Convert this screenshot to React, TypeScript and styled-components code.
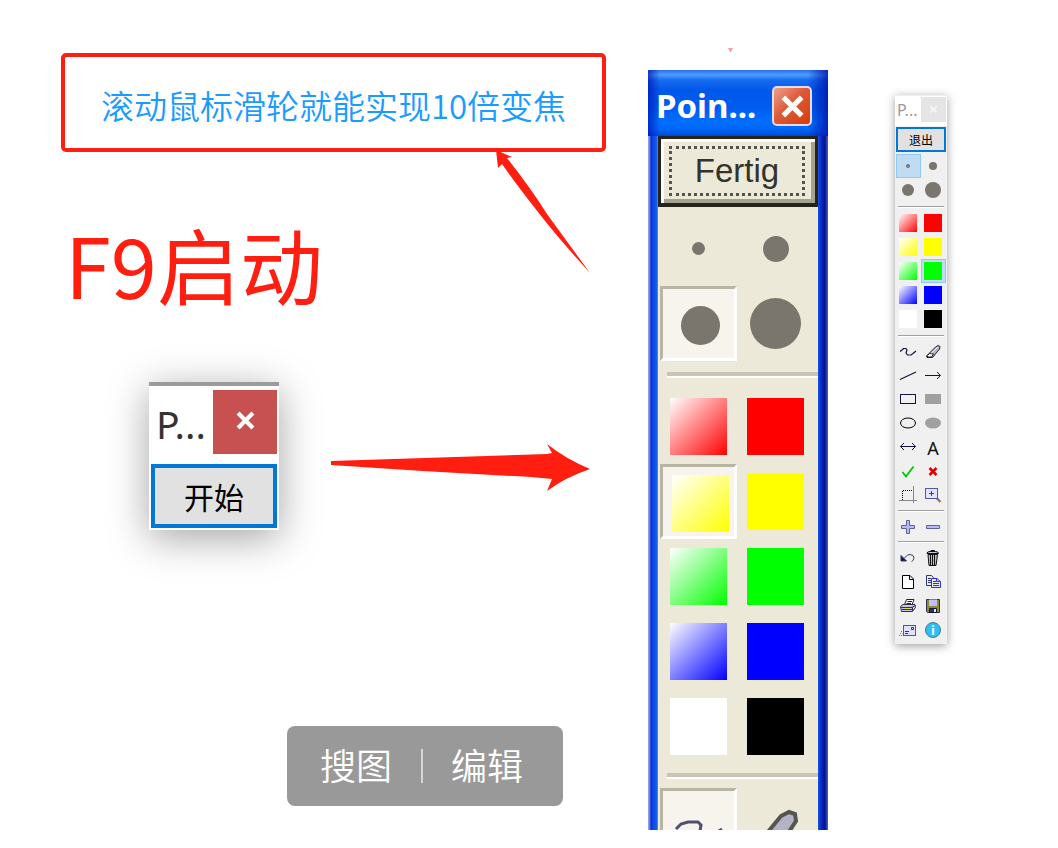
import React from "react";
import styled, { createGlobalStyle, css } from "styled-components";

const GlobalStyle = createGlobalStyle`
  *, *::before, *::after { box-sizing: border-box; }
  body {
    margin: 0;
    background: #fff;
    font-family: "Noto Sans", "Noto Sans CJK SC", sans-serif;
  }
  button { font: inherit; color: inherit; margin: 0; padding: 0; border: 0; background: none; cursor: pointer; }
  svg { display: block; overflow: visible; flex: none; }
`;

const RED = "#ff1e10";
const INK = "#14143c";

/* ---------- page ---------- */

const Board = styled.main`
  display: grid;
  grid-template-columns: minmax(0, 1fr) 180px 52px;
  column-gap: 67px;
  align-items: start;
  padding: 46px 111px 18px 61px;
`;

const Guide = styled.section`
  display: flex;
  flex-direction: column;
  margin-right: -67px;
  padding-top: 7px;
`;

const Note = styled.p`
  margin: 0 42px 0 0;
  height: 99px;
  display: flex;
  align-items: center;
  justify-content: center;
  padding-top: 4px;
  border: 4px solid ${RED};
  border-radius: 5px;
  color: #1a9bff;
  font-family: "Noto Sans CJK SC", sans-serif;
  font-weight: 350;
  font-size: 33px;
  line-height: 40px;
  white-space: nowrap;
`;

const ShortcutRow = styled.div`
  display: flex;
  justify-content: space-between;
  align-items: flex-start;
  height: 230px;
  padding: 0 58px 0 4px;
`;

const Shortcut = styled.h1`
  margin: 51px 0 0;
  color: ${RED};
  font-family: "Noto Sans CJK SC", sans-serif;
  font-weight: 400;
  font-size: 83px;
  line-height: 120px;
  white-space: nowrap;
`;

const LaunchRow = styled.div`
  display: flex;
  align-items: flex-start;
  gap: 52px;
  padding-left: 88px;
  height: 344px;
`;

const Launcher = styled.section`
  width: 130px;
  height: 148px;
  padding: 4px 2px 2px;
  border-top: 4px solid #9b9b9b;
  background: #fff;
  box-shadow: 0 8px 38px rgba(0, 0, 0, 0.36);
`;

const LauncherBar = styled.header`
  display: flex;
  justify-content: space-between;
  height: 74px;
  padding-left: 5px;
  font-family: "Noto Sans", sans-serif;
  font-size: 39px;
  line-height: 68px;
  color: #333;
`;

const LauncherClose = styled.button`
  display: grid;
  place-items: center;
  width: 64px;
  height: 64px;
  padding-bottom: 4px;
  background: #c75050;
`;

const StartButton = styled.button`
  display: block;
  width: 100%;
  height: 64px;
  border: 4px solid #0078d7;
  background: #e1e1e1;
  color: #000;
  font-family: "Noto Sans CJK SC", sans-serif;
  font-size: 30px;
  line-height: 56px;
`;

const PointRight = styled.svg`
  margin-top: 62px;
`;

const ActionBar = styled.nav`
  display: flex;
  align-items: center;
  justify-content: space-between;
  width: 276px;
  height: 80px;
  margin-left: 226px;
  padding: 0 40px 4px 33px;
  border-radius: 8px;
  background: #999;
  color: #fff;
`;

const Action = styled.button`
  font-family: "Noto Sans CJK SC", sans-serif;
  font-weight: 350;
  font-size: 36px;
  line-height: 48px;
`;

const Divider = styled.span`
  width: 2px;
  height: 34px;
  margin-top: 4px;
  background: #d6d6d6;
`;

/* ---------- large palette ---------- */

const PaletteColumn = styled.div`
  display: flex;
  flex-direction: column;
`;

const Speck = styled.svg`
  margin: 2px 0 17px 80px;
`;

const Palette = styled.section`
  border-radius: 2px 2px 0 0;
  background: linear-gradient(90deg, #8f9ce8 0 1px, #0831d9 3px, #0a48e4 5px, #1660ea 9px, #6e9cf0 10px,
    #1e50d8 170px, #0a2ccc 173px, #00138c 177px, #5862b0 180px);
`;

const PaletteBar = styled.header`
  display: flex;
  align-items: center;
  justify-content: space-between;
  height: 66px;
  padding: 6px 16px 0 8px;
  background:
    linear-gradient(90deg, rgba(0, 20, 180, 0.7), transparent 12px 160px, rgba(0, 20, 170, 0.8)),
    linear-gradient(#2c70e8, #4a9cff 5px, #1a6cf0 10px, #0058ea 20px, #005cf0 38px, #0070ff 52px, #0064f4 60px, #0048d8);
  color: #fff;
  font-family: "Noto Sans", sans-serif;
  font-weight: 700;
  font-size: 33px;
  line-height: 40px;
`;

const PaletteClose = styled.button`
  display: grid;
  place-items: center;
  width: 40px;
  height: 40px;
  border: 2px solid #e4dcf0;
  border-radius: 5px;
  background: linear-gradient(135deg, #f0a08c, #dc5a38 45%, #d83c08);
`;

const PaletteBody = styled.div`
  height: 694px;
  margin: 0 10px;
  overflow: hidden;
  background: #ece9d8;
`;

const DoneButton = styled.button`
  display: block;
  width: 100%;
  height: 71px;
  padding: 6px 8px 6px 6px;
  border: 3px solid #24241c;
  border-bottom-width: 4px;
  background: #ece9d8;
  box-shadow: inset 3px 3px #fbfaf4, inset -4px -4px #a5a28f;
  color: #33332e;
  font-family: "Liberation Sans", sans-serif;
  font-size: 33px;
  line-height: 44px;
`;

const FocusRing = styled.span`
  display: block;
  height: 50px;
  margin: 0 2px;
  border: 3px dotted #55544c;
`;

const BigGrid = styled.div<{ $first?: boolean }>`
  display: grid;
  grid-template-columns: 77px 77px;
  grid-auto-rows: 75px;
  padding: ${(p) => (p.$first ? "4px" : "0")} 0 0 2px;
`;

const BigCell = styled.button<{ $selected?: boolean }>`
  display: grid;
  place-items: center;
  ${(p) =>
    p.$selected &&
    css`
      padding: 3px 0 0 3px;
      border: 3px solid;
      border-color: #b9b5a3 #fff #fff #b9b5a3;
      background: #f6f4ec;
    `}
`;

const BigRule = styled.hr<{ $tight?: boolean }>`
  height: 6px;
  margin: ${(p) => (p.$tight ? "9px 0 9px 9px" : "11px 0 11px 9px")};
  border: 0;
  border-top: 4px solid #c9c5b6;
  border-bottom: 2px solid #fff;
`;

/* ---------- small palette ---------- */

const MiniPalette = styled.section`
  margin-top: 49px;
  padding: 1px 1px 2px;
  background: #f0f0f0;
  box-shadow: 0 2px 9px rgba(0, 0, 0, 0.38);
`;

const MiniBar = styled.header`
  display: flex;
  justify-content: space-between;
  height: 30px;
  margin: 0 -1px 1px;
  padding: 1px 1px 0 2px;
  background: #fff;
  color: #999;
  font-family: "Noto Sans", sans-serif;
  font-size: 16px;
  line-height: 27px;
`;

const MiniClose = styled.button`
  display: grid;
  place-items: center;
  width: 25px;
  height: 25px;
  background: #e5e5e5;
`;

const ExitButton = styled.button`
  display: block;
  width: 100%;
  height: 25px;
  margin-bottom: 2px;
  border: 2px solid #0078d7;
  background: #e1e1e1;
  color: #000;
  font-family: "Noto Sans CJK SC", sans-serif;
  font-size: 12px;
  line-height: 20px;
`;

const MiniGrid = styled.div`
  display: grid;
  grid-template-columns: 25px 25px;
  grid-auto-rows: 24px;
`;

const MiniCell = styled.button<{ $selected?: boolean }>`
  display: grid;
  place-items: center;
  padding-right: 1px;
  ${(p) =>
    p.$selected &&
    css`
      border: 1px solid #90c8f6;
      background: #c0dcf3;
    `}
`;

const MiniRule = styled.hr<{ $tight?: boolean }>`
  height: 2px;
  margin: ${(p) => (p.$tight ? "2px 2px 3px" : "4px 2px 3px")};
  border: 0;
  border-top: 1px solid #a0a0a0;
  border-bottom: 1px solid #fff;
`;

/* ---------- shared parts ---------- */

const Dot = styled.span<{ $size: number }>`
  width: ${(p) => p.$size}px;
  height: ${(p) => p.$size}px;
  border-radius: 50%;
  background: #7a766e;
`;

const Swatch = styled.span<{ $size: number; $color: string; $faded?: boolean }>`
  width: ${(p) => p.$size}px;
  height: ${(p) => p.$size}px;
  background: ${(p) => (p.$faded ? `linear-gradient(135deg, #fff, ${p.$color})` : p.$color)};
`;

const Letter = styled.span`
  color: #111;
  font-family: "Noto Sans", sans-serif;
  font-size: 18px;
  line-height: 24px;
`;

const swatches = [
  { name: "red", color: "#ff0000", faded: true },
  { name: "red", color: "#ff0000" },
  { name: "yellow", color: "#ffff00", faded: true },
  { name: "yellow", color: "#ffff00" },
  { name: "green", color: "#00ff00", faded: true },
  { name: "green", color: "#00ff00" },
  { name: "blue", color: "#0000ff", faded: true },
  { name: "blue", color: "#0000ff" },
  { name: "white", color: "#ffffff" },
  { name: "black", color: "#000000" },
];

const Cross = ({ size, color, width }: { size: number; color: string; width: number }) => (
  <svg width={size} height={size} viewBox="0 0 16 16" stroke={color} strokeWidth={width}>
    <path d="M1 1L15 15M15 1L1 15" />
  </svg>
);

const Icon = ({ children }: { children: React.ReactNode }) => (
  <svg width="16" height="16" viewBox="0 0 16 16" fill="none" stroke={INK} strokeWidth="1">
    {children}
  </svg>
);

const drawTools: [string, React.ReactNode][] = [
  ["Freehand", <Icon><path d="M0 7.5L1.5 6.5L3.5 4.5H6L7 6L6 9L7.5 11H11L13 9.5L16 7" strokeWidth="1.2" /></Icon>],
  ["Eraser", (
    <Icon>
      <path d="M1.5 12L10.5 3L13 1.5L15 2.5L14.5 5L7.5 13.5H2Z" fill="#b4b4cc" stroke="#222" />
      <path d="M2.5 11.5L4.5 9.5L8.5 10L6.5 13H2.5Z" fill="#fff" stroke="#222" />
      <path d="M6.5 9L13 3" stroke="#eeeef8" />
    </Icon>
  )],
  ["Line", <Icon><path d="M0 11.5L16 4" strokeWidth="1.2" /></Icon>],
  ["Arrow", <Icon><path d="M0 7.5H15M12 4L15.5 7.5L12 11" /></Icon>],
  ["Rectangle", <Icon><rect x="0.5" y="2.5" width="15" height="9" /></Icon>],
  ["Filled rectangle", <Icon><path d="M0 2H16V12H0Z" fill="#a0a0a0" stroke="none" /></Icon>],
  ["Ellipse", <Icon><ellipse cx="8" cy="7" rx="7.5" ry="5" stroke="#000" /></Icon>],
  ["Filled ellipse", <Icon><ellipse cx="8" cy="7" rx="8" ry="5.5" fill="#a0a0a0" stroke="none" /></Icon>],
  ["Double arrow", <Icon><path d="M0.5 6.5H15.5M4 3L0.5 6.5L4 10M12 3L15.5 6.5L12 10" /></Icon>],
  ["Text", <Letter>A</Letter>],
  ["Tick", <Icon><path d="M2.5 8L6 12.5L13.5 2.5" stroke="#00c800" strokeWidth="1.8" /></Icon>],
  ["Cross", <Icon><path d="M4.5 4L11.5 11M11.5 4L4.5 11" stroke="#e00000" strokeWidth="2.6" /></Icon>],
  ["Crop", (
    <Icon>
      <path d="M13.5 -2V15M-1 12.5H17" stroke="#888" />
      <path d="M2.5 12V2.5H13" stroke="#000" strokeDasharray="1 1" />
    </Icon>
  )],
  ["Magnify", (
    <Icon>
      <path d="M11 9.5L15.5 14" stroke="#9a7850" strokeWidth="2.4" />
      <rect x="0.5" y="0.5" width="12" height="10" fill="#e4e4ff" stroke="#5058a8" />
      <path d="M6.5 3V8M4 5.5H9" stroke="#3a4080" />
    </Icon>
  )],
];

const sizeTools: [string, React.ReactNode][] = [
  ["Increase", <Icon><path d="M6.5 1.5H9.5V6.5H14.5V9.5H9.5V14.5H6.5V9.5H1.5V6.5H6.5Z" fill="#b8b8fc" stroke="#5c6490" /></Icon>],
  ["Decrease", <Icon><path d="M1.5 6.5H14.5V9.5H1.5Z" fill="#b8b8fc" stroke="#5c6490" /></Icon>],
];

const fileTools: [string, React.ReactNode][] = [
  ["Undo", (
    <Icon>
      <path d="M1 5.5V11H6.5L4.5 9Z" fill={INK} stroke="#303a68" />
      <path d="M3.5 9L7.5 5L10 4.5L13 5.5L14 8L13 10.5L11.5 11.5" stroke="#39406c" />
    </Icon>
  )],
  ["Delete", (
    <Icon>
      <path d="M3 4.5L4 15.5H11L12.5 4.5Z" fill="#b8b8d8" stroke="#111" />
      <path d="M5.5 5V15M7.5 5V15M9.5 5V15" stroke="#111" />
      <path d="M2 3.5Q2 1.5 5 1.5H10.5Q13.5 1.5 13.5 3.5Z" fill="#c8c8e0" stroke="#111" />
      <path d="M6 1.5V0.5H9.5V1.5" stroke="#111" />
    </Icon>
  )],
  ["New page", <Icon><path d="M2.5 1.5H10L13.5 5V14.5H2.5ZM9.5 1.5V5.5H13.5" fill="#fff" stroke="#000" /></Icon>],
  ["Copy", (
    <Icon>
      <path d="M1.5 1.5H6.5L8.5 3.5V11.5H1.5Z" fill="#e8e8f8" stroke="#303868" />
      <path d="M3 4.5H6M3 6.5H6M3 8.5H6" stroke="#303868" />
      <path d="M6.5 4.5H12L15.5 7.5V13.5H6.5Z" fill="#e8e8ff" stroke="#3030d8" />
      <path d="M8 7.5H11M8 9.5H14M8 11.5H14M11.5 4.5V7.5H15" stroke="#3030d8" />
    </Icon>
  )],
  ["Print", (
    <Icon>
      <path d="M4.5 6.5L6.5 1.5H14L12 7" fill="#fff" stroke="#222" />
      <path d="M7.5 3.5H12M6.5 5.5H11" stroke="#222" />
      <path d="M0.5 8.5L3 6.5H15L15.5 9.5L12.5 13.5H1.5Z" fill="#c8c8dc" stroke="#303050" />
      <path d="M1 9.5H12L15 7.5M12.5 9.5V13M2 11.5H12" stroke="#303050" />
      <path d="M6 10.5H10" stroke="#e8e020" />
    </Icon>
  )],
  ["Save", (
    <Icon>
      <path d="M1.5 1.5H14.5V14.5H2.5L1.5 13.5Z" fill="#8c8c30" stroke="#303050" />
      <path d="M4 1.5H12V8H4Z" fill="#c0c0ff" stroke="none" />
      <path d="M4.5 10.5H11.5V14.5H4.5Z" fill="#303050" />
      <path d="M9 11H11V14H9Z" fill="#e8e8e8" stroke="none" />
    </Icon>
  )],
  ["Send", (
    <Icon>
      <rect x="3.5" y="3.5" width="12" height="10" fill="#e0e0ff" stroke="#505890" />
      <path d="M5 9.5H9M5 11.5H8M11.5 5.5H13.5V7.5H11.5Z" stroke="#303868" />
      <path d="M1 9.5H2.5M0 11.5H2.5M-1 13.5H2.5" stroke="#777" strokeDasharray="1 1" />
    </Icon>
  )],
  ["Info", (
    <Icon>
      <circle cx="8" cy="8" r="7.5" fill="#28c0f8" stroke="#507888" />
      <text x="8" y="13" textAnchor="middle" fontFamily="Noto Sans" fontSize="13" fontWeight="700" fill="#fff" stroke="none">i</text>
    </Icon>
  )],
];

const ToolGrid = ({ tools }: { tools: [string, React.ReactNode][] }) => (
  <MiniGrid>
    {tools.map(([label, art]) => (
      <MiniCell key={label} aria-label={label}>{art}</MiniCell>
    ))}
  </MiniGrid>
);

export default function App() {
  return (
    <>
      <GlobalStyle />
      <Board>
        <Guide>
          <Note>滚动鼠标滑轮就能实现10倍变焦</Note>
          <ShortcutRow>
            <Shortcut>F9启动</Shortcut>
            <svg width="94" height="122" viewBox="0 0 94 122">
              <path d="M0 -2L16 5L11 6Q34 35 51 62L94 121Q62 86 42 60Q20 32 6 12L2 16Z" fill={RED} />
            </svg>
          </ShortcutRow>
          <LaunchRow>
            <Launcher>
              <LauncherBar>
                <span>P...</span>
                <LauncherClose aria-label="Close"><Cross size={17} color="#fff" width={4} /></LauncherClose>
              </LauncherBar>
              <StartButton>开始</StartButton>
            </Launcher>
            <PointRight width="259" height="48" viewBox="0 0 259 48">
              <path d="M0 17L216 10L221 9L216 0Q235 15 259 25Q235 33 216 47L221 35L200 33Q100 28 0 21Z" fill={RED} />
            </PointRight>
          </LaunchRow>
          <ActionBar>
            <Action>搜图</Action>
            <Divider />
            <Action>编辑</Action>
          </ActionBar>
        </Guide>

        <PaletteColumn>
          <Speck width="5" height="5" viewBox="0 0 5 5"><path d="M0 0H5L3 4H2Z" fill="#f0a0a0" /></Speck>
          <Palette>
            <PaletteBar>
              <span>Poin...</span>
              <PaletteClose aria-label="Close"><Cross size={21} color="#fff" width={4} /></PaletteClose>
            </PaletteBar>
            <PaletteBody>
              <DoneButton><FocusRing>Fertig</FocusRing></DoneButton>
              <BigGrid $first>
                {[13, 26, 39, 51].map((size) => (
                  <BigCell key={size} $selected={size === 39} aria-label={`Pen ${size}`}><Dot $size={size} /></BigCell>
                ))}
              </BigGrid>
              <BigRule />
              <BigGrid>
                {swatches.map((s, i) => (
                  <BigCell key={i} $selected={i === 2} aria-label={s.name}>
                    <Swatch $size={57} $color={s.color} $faded={s.faded} />
                  </BigCell>
                ))}
              </BigGrid>
              <BigRule $tight />
              <BigGrid>
                <BigCell $selected aria-label="Freehand">
                  <svg width="48" height="16" viewBox="0 0 48 16" fill="none" stroke="#50506e" strokeWidth="3">
                    <path d="M0 10L5 5L12 3H22L25 6L24 12M46 10L40 14" />
                  </svg>
                </BigCell>
                <BigCell aria-label="Eraser">
                  <svg width="46" height="36" viewBox="0 0 46 36">
                    <path d="M10 30L28 8L36 4L42 6L43 13L28 36H10Z" fill="#b4b2c6" stroke="#55554f" strokeWidth="4" />
                  </svg>
                </BigCell>
              </BigGrid>
            </PaletteBody>
          </Palette>
        </PaletteColumn>

        <MiniPalette>
          <MiniBar>
            <span>P...</span>
            <MiniClose aria-label="Close"><Cross size={7} color="#fafafa" width={3} /></MiniClose>
          </MiniBar>
          <ExitButton>退出</ExitButton>
          <MiniGrid>
            {[4, 8, 12, 16].map((size) => (
              <MiniCell key={size} $selected={size === 4} aria-label={`Pen ${size}`}><Dot $size={size} /></MiniCell>
            ))}
          </MiniGrid>
          <MiniRule />
          <MiniGrid>
            {swatches.map((s, i) => (
              <MiniCell key={i} $selected={i === 5} aria-label={s.name}>
                <Swatch $size={18} $color={s.color} $faded={s.faded} />
              </MiniCell>
            ))}
          </MiniGrid>
          <MiniRule />
          <ToolGrid tools={drawTools} />
          <MiniRule $tight />
          <ToolGrid tools={sizeTools} />
          <MiniRule $tight />
          <ToolGrid tools={fileTools} />
        </MiniPalette>
      </Board>
    </>
  );
}
